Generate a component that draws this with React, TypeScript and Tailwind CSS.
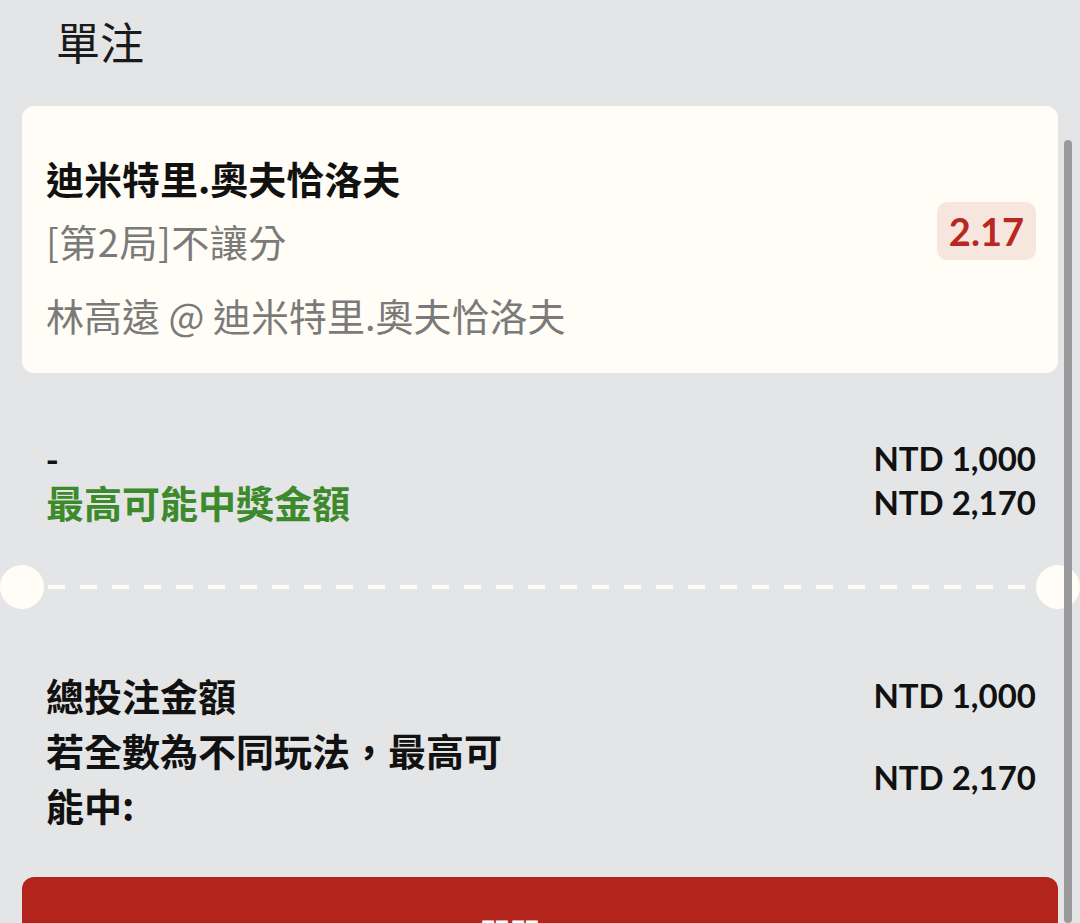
const cjk = "font-['Noto_Sans_CJK_TC','Noto_Sans',sans-serif]"
const lato = "font-['Lato','Noto_Sans_CJK_TC',sans-serif]"

function Amount({ children }: { children: React.ReactNode }) {
  return <span className={`${lato} text-[33px] font-bold text-[#111] leading-[44px]`}>{children}</span>
}

export default function App() {
  return (
    <div className="relative h-[923px] overflow-hidden bg-[#e4e5e7] px-[22px]">
      {/* scrollbar */}
      <div className="absolute right-[8px] top-[140px] bottom-0 w-[8px] rounded-full bg-[#9a9a9c]" />

      <h1 className={`${cjk} pt-[13px] pl-[34px] text-[44px] font-normal leading-[56px] text-[#1a1a1a]`}>單注</h1>

      {/* selection card */}
      <div className="mt-[37px] flex items-center justify-between rounded-[12px] bg-[#fffdf5] pl-[24px] pr-[22px] pt-[47px] pb-[33px]">
        <div className={cjk}>
          <p className="text-[38px] font-bold leading-[50px] text-[#111]">迪米特里.奧夫恰洛夫</p>
          <p className="mt-[13px] text-[38px] leading-[50px] tracking-[0.5px] text-[#7a7a7a]">[第2局]不讓分</p>
          <p className="mt-[24px] text-[38px] leading-[50px] text-[#7a7a7a]">林高遠 @ 迪米特里.奧夫恰洛夫</p>
        </div>
        <div className={`${lato} mb-[32px] rounded-[10px] bg-[#f7e6de] px-[12px] text-[38px] font-bold leading-[58px] text-[#b82820]`}>
          2.17
        </div>
      </div>

      {/* potential win */}
      <div className="mt-[63px] flex justify-between pl-[24px] pr-[22px]">
        <div className={cjk}>
          <p className="text-[34px] font-bold leading-[44px] text-[#111]">-</p>
          <p className="text-[38px] font-bold leading-[44px] text-[#3d8a2c]">最高可能中獎金額</p>
        </div>
        <div className="flex flex-col items-end">
          <Amount>NTD 1,000</Amount>
          <Amount>NTD 2,170</Amount>
        </div>
      </div>

      {/* ticket divider */}
      <div className="-mx-[22px] mt-[41px] flex items-center">
        <div className="h-[44px] w-[44px] rounded-full bg-[#fffdf5]" />
        <div className="mx-[4px] h-[4px] flex-1 bg-[repeating-linear-gradient(90deg,#fdfbf2_0_17px,transparent_17px_32px)]" />
        <div className="h-[44px] w-[44px] rounded-full bg-[#fffdf5]" />
      </div>

      {/* totals */}
      <div className={`${cjk} mt-[58px] pl-[24px] pr-[22px] text-[38px] font-bold text-[#111]`}>
        <div className="flex items-center justify-between">
          <span className="leading-[55px]">總投注金額</span>
          <Amount>NTD 1,000</Amount>
        </div>
        <div className="flex items-center justify-between">
          <span className="w-[480px] leading-[55px]">若全數為不同玩法，最高可能中:</span>
          <Amount>NTD 2,170</Amount>
        </div>
      </div>

      <button className={`${cjk} mt-[45px] h-[110px] w-full rounded-[12px] bg-[#b3241c] pr-[60px] text-[30px] font-bold text-white`}>
        關閉
      </button>
    </div>
  )
}
